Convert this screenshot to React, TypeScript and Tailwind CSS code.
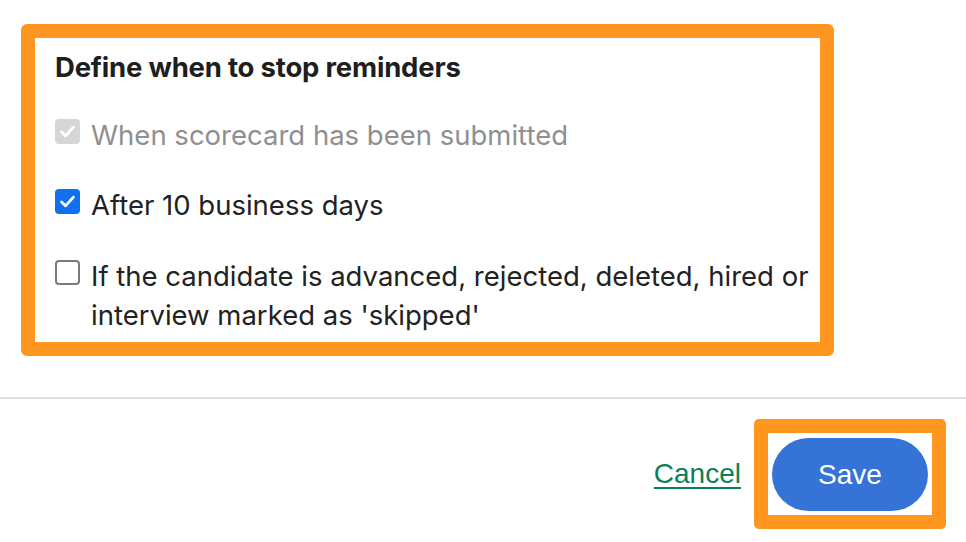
import React, { useState } from 'react';

const CheckIcon: React.FC = () => (
  <svg viewBox="0 0 24 24" className="w-[19px] h-[19px]" fill="none" stroke="white" strokeWidth={3.6} strokeLinecap="round" strokeLinejoin="round">
    <path d="M4.5 12.5l5 5L19.5 6.5" />
  </svg>
);

type BoxState = 'disabled' | 'checked' | 'unchecked';

const Box: React.FC<{ state: BoxState; onClick?: () => void }> = ({ state, onClick }) => {
  if (state === 'disabled') {
    return (
      <span className="mt-[3px] w-[25px] h-[25px] shrink-0 rounded-[4px] bg-[#d6d6d6] flex items-center justify-center">
        <CheckIcon />
      </span>
    );
  }
  if (state === 'checked') {
    return (
      <span onClick={onClick} className="mt-[3px] w-[25px] h-[25px] shrink-0 rounded-[4px] bg-[#1270ee] flex items-center justify-center cursor-pointer">
        <CheckIcon />
      </span>
    );
  }
  return (
    <span onClick={onClick} className="mt-[3px] w-[25px] h-[25px] shrink-0 rounded-[4px] border-2 border-[#7a7a7a] bg-white cursor-pointer" />
  );
};

export default function App() {
  const [afterDays, setAfterDays] = useState(true);
  const [candidate, setCandidate] = useState(false);

  return (
    <div className="w-[966px] h-[542px] bg-white overflow-hidden font-['Inter','Noto_Sans',sans-serif] text-[#222222]">
      <div className="ml-[21px] mt-[24px] w-[813px] border-[14px] border-[#fe961f] rounded-[6px]">
        <div className="pl-[20px] pt-[12px] pb-[7px] pr-[4px] flex flex-col">
          <h3 className="text-[27.5px] leading-[34px] font-bold tracking-[-0.2px] text-[#1e1e1e]">
            Define when to stop reminders
          </h3>

          <div className="mt-[32px] flex items-start gap-[11px] text-[27.5px] leading-[38px] text-[#8f8f8f]">
            <Box state="disabled" />
            <span>When scorecard has been submitted</span>
          </div>

          <div className="mt-[32px] flex items-start gap-[11px] text-[27.5px] leading-[38px]">
            <Box state={afterDays ? 'checked' : 'unchecked'} onClick={() => setAfterDays(!afterDays)} />
            <span>After 10 business days</span>
          </div>

          <div className="mt-[33px] flex items-start gap-[11px] text-[27.5px] leading-[39px]">
            <Box state={candidate ? 'checked' : 'unchecked'} onClick={() => setCandidate(!candidate)} />
            <span className="max-w-[730px]">
              If the candidate is advanced, rejected, deleted, hired or interview marked as 'skipped'
            </span>
          </div>
        </div>
      </div>

      <div className="mt-[41px] border-t-2 border-[#e0e0e0]" />

      <div className="mt-[20px] mr-[20px] flex items-center justify-end gap-[13px]">
        <a href="#" className="font-['Liberation_Sans',Arial,sans-serif] text-[28px] text-[#0b7f55] underline underline-offset-[4px] decoration-[2px]">
          Cancel
        </a>
        <div className="border-[14px] border-[#fe961f] rounded-[5px] pt-[5px] pb-[4px] px-[4px]">
          <button className="w-[156px] h-[73px] rounded-full bg-[#3574d6] text-white font-['Liberation_Sans',Arial,sans-serif] text-[28px]">
            Save
          </button>
        </div>
      </div>
    </div>
  );
}
